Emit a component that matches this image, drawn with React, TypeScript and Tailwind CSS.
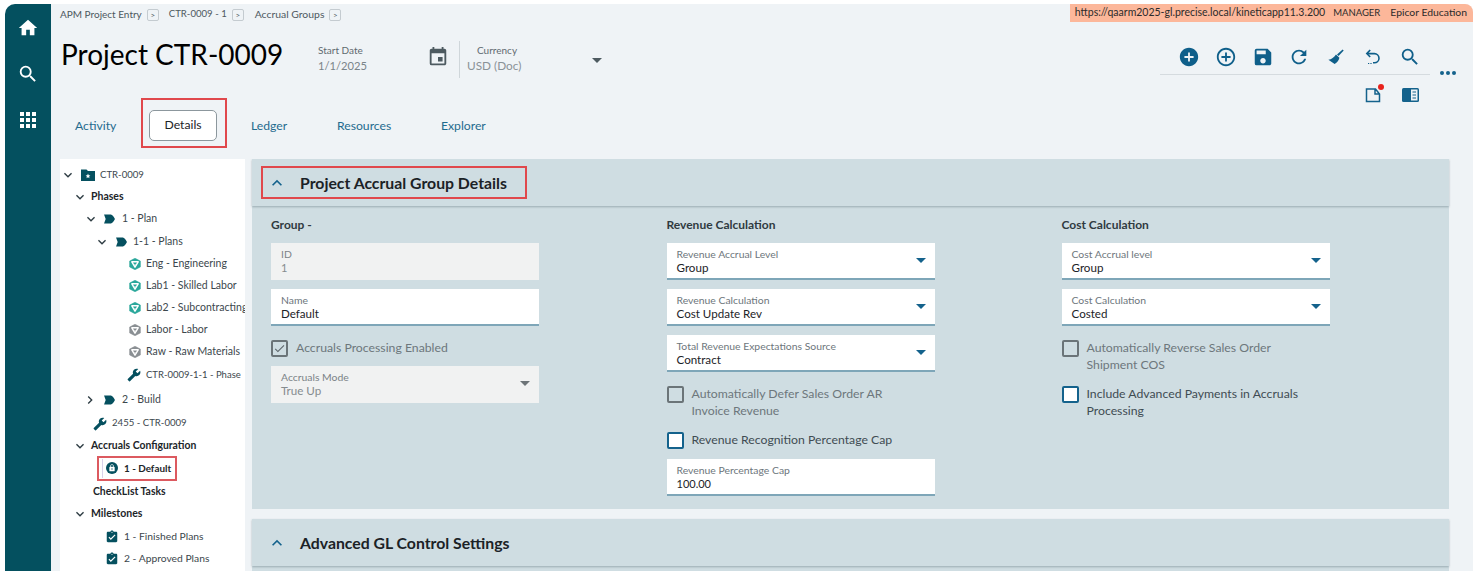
import React from "react";
import {
  MdHome, MdSearch, MdApps, MdAddCircle, MdAddCircleOutline, MdSave, MdRefresh, MdEvent, MdBuild,
  MdAssignmentTurnedIn, MdExpandMore, MdChevronRight, MdExpandLess, MdArrowDropDown, MdCheck, MdLock,
} from "react-icons/md";

function Phase({ cls = "" }: { cls?: string }) {
  return (
    <svg viewBox="0 0 12 11" className={"w-[11px] h-[10px] shrink-0 " + cls}>
      <path d="M0 0.5H7.5C9 0.5 11 3.5 12 5.5C11 7.5 9 10.5 7.5 10.5H0L1.8 5.5Z" fill="#05505f" />
    </svg>
  );
}

function Res({ color, cls = "" }: { color: string; cls?: string }) {
  return (
    <svg viewBox="0 0 12 12" className={"w-[12px] h-[12px] shrink-0 " + cls}>
      <path d="M6 0.2L11.4 3.1V8.9L6 11.8L0.6 8.9V3.1Z" fill={color} stroke={color} strokeWidth="0.5" strokeLinejoin="round" />
      <path d="M2.8 3.8H9.2L6 9.2Z" stroke="#fff" strokeWidth="1.4" fill="none" strokeLinejoin="round" />
      <path d="M6 6.2V7.2" stroke="#fff" strokeWidth="1" />
    </svg>
  );
}

function Folder() {
  return (
    <svg viewBox="0 0 14 12" className="w-[14px] h-[12px] ml-[5px] shrink-0">
      <path d="M0 0.5H5.5L7 2H14V12H0Z" fill="#05505f" />
      <path d="M7 4.6L7.7 6.2L9.4 6.4L8.1 7.5L8.5 9.2L7 8.3L5.5 9.2L5.9 7.5L4.6 6.4L6.3 6.2Z" fill="#fff" />
    </svg>
  );
}

const Wrench = () => <MdBuild className="w-[14px] h-[14px] shrink-0 -scale-x-100 text-[#05505f]" />;
const Clip = () => <MdAssignmentTurnedIn className="w-[14px] h-[14px] shrink-0 text-[#05505f]" />;

type Row = { h: string; pl: string; chev?: "d" | "r"; icon?: React.ReactNode; text: string; tcls: string; bold?: boolean };

const rows: Row[] = [
  { h: "h-[22px]", pl: "pl-0", chev: "d", icon: <Folder />, text: "CTR-0009", tcls: "ml-[5px] text-[9.6px]" },
  { h: "h-[22px]", pl: "pl-[12px]", chev: "d", text: "Phases", tcls: "ml-[3px] text-[10.5px]", bold: true },
  { h: "h-[22px]", pl: "pl-[23px]", chev: "d", icon: <Phase cls="ml-[5px]" />, text: "1 - Plan", tcls: "ml-[7px] text-[10.5px]" },
  { h: "h-[23px]", pl: "pl-[34px]", chev: "d", icon: <Phase cls="ml-[6px]" />, text: "1-1 - Plans", tcls: "ml-[6px] text-[10.5px]" },
  { h: "h-[22px]", pl: "pl-[69px]", icon: <Res color="#2aa79b" />, text: "Eng - Engineering", tcls: "ml-[5px] text-[10.5px]" },
  { h: "h-[22px]", pl: "pl-[69px]", icon: <Res color="#2aa79b" />, text: "Lab1 - Skilled Labor", tcls: "ml-[5px] text-[10.5px]" },
  { h: "h-[22px]", pl: "pl-[69px]", icon: <Res color="#2aa79b" />, text: "Lab2 - Subcontracting", tcls: "ml-[5px] text-[10.5px]" },
  { h: "h-[22px]", pl: "pl-[69px]", icon: <Res color="#8a8f93" />, text: "Labor - Labor", tcls: "ml-[5px] text-[10.5px]" },
  { h: "h-[22px]", pl: "pl-[69px]", icon: <Res color="#8a8f93" />, text: "Raw - Raw Materials", tcls: "ml-[5px] text-[10.5px]" },
  { h: "h-[24px]", pl: "pl-[67px]", icon: <Wrench />, text: "CTR-0009-1-1 - Phase", tcls: "ml-[5px] text-[9.5px]" },
  { h: "h-[25px]", pl: "pl-[22px]", chev: "r", icon: <Phase cls="ml-[6px]" />, text: "2 - Build", tcls: "ml-[7px] text-[10.5px]" },
  { h: "h-[23px]", pl: "pl-[33px]", icon: <Wrench />, text: "2455 - CTR-0009", tcls: "ml-[5px] text-[9.6px]" },
  { h: "h-[22px]", pl: "pl-[12px]", chev: "d", text: "Accruals Configuration", tcls: "ml-[3px] text-[10.4px]", bold: true },
];

const rowsAfter: Row[] = [
  { h: "h-[23px]", pl: "pl-[33px]", text: "CheckList Tasks", tcls: "text-[10.4px]", bold: true },
  { h: "h-[22px]", pl: "pl-[12px]", chev: "d", text: "Milestones", tcls: "ml-[3px] text-[10.5px]", bold: true },
  { h: "h-[23px]", pl: "pl-[45px]", icon: <Clip />, text: "1 - Finished Plans", tcls: "ml-[5px] text-[10.3px]" },
  { h: "h-[22px]", pl: "pl-[45px]", icon: <Clip />, text: "2 - Approved Plans", tcls: "ml-[5px] text-[10.3px]" },
];

function TreeRow({ r }: { r: Row }) {
  return (
    <div className={"flex items-center whitespace-nowrap overflow-hidden pr-[2px] " + r.h + " " + r.pl}>
      {r.chev === "d" && <MdExpandMore className="w-[16px] h-[16px] shrink-0 text-[#2d3b42]" />}
      {r.chev === "r" && <MdChevronRight className="w-[16px] h-[16px] shrink-0 text-[#2d3b42]" />}
      {r.icon}
      <span className={r.tcls + " " + (r.bold ? "font-bold text-[#1c2529]" : "text-[#3c474d]")}>{r.text}</span>
    </div>
  );
}

function Field({ label, value, disabled, select, valueCls = "text-[11.6px]" }: { label: string; value: string; disabled?: boolean; select?: boolean; valueCls?: string }) {
  return (
    <div className={"relative h-[37px] w-[268px] pl-[10px] pt-[4px] " + (disabled ? "bg-[#f1f2f2]" : "bg-white border-b-2 border-[#7ea6b8]")}>
      <div className={"text-[10.4px] leading-[14px] " + (disabled ? "text-[#7b8287]" : "text-[#6d767c]")}>{label}</div>
      <div className={"leading-[14px] " + valueCls + " " + (disabled ? "text-[#858b8f]" : "text-[#1c2327]")}>{value}</div>
      {select && (
        <MdArrowDropDown className={"absolute right-[2px] top-[5px] w-[24px] h-[24px] " + (disabled ? "text-[#6d7478]" : "text-[#14628c]")} />
      )}
    </div>
  );
}

function Check({ lines, active, checked, cls }: { lines: string[]; active?: boolean; checked?: boolean; cls: string }) {
  return (
    <div className={"flex w-[268px] " + cls}>
      <div className={"w-[17px] h-[17px] shrink-0 rounded-[2px] border-2 flex items-center justify-center " + (active ? "bg-white border-[#14628c]" : "border-[#6b7478]")}>
        {checked && <MdCheck className="w-[15px] h-[15px] text-[#5d666b]" />}
      </div>
      <div className={"ml-[8px] -mt-[1px] text-[12.25px] leading-[17px] " + (active ? "text-[#3f4c53]" : "text-[#6d777c]")}>
        {lines.map((l) => <div key={l} className="whitespace-nowrap">{l}</div>)}
      </div>
    </div>
  );
}

function CardHeader({ title, boxed }: { title: string; boxed?: boolean }) {
  return (
    <div className="h-[47px] shrink-0 flex items-center pl-[9px] shadow-[0_1px_2px_rgba(90,110,120,0.45)]">
      <div className={"flex items-center h-[33px] w-[266px] pl-[4px] border-2 " + (boxed ? "border-[#e0484c]" : "border-transparent")}>
        <MdExpandLess className="w-[20px] h-[20px] text-[#14628c]" />
        <span className="ml-[13px] text-[15.8px] font-bold text-[#1b2226] whitespace-nowrap">{title}</span>
      </div>
    </div>
  );
}

function Crumb({ text, cls }: { text: string; cls: string }) {
  return (
    <>
      <span className={cls}>{text}</span>
      <span className="ml-[5px] w-[12px] h-[12px] border border-[#c4cbd0] rounded-[2px] flex items-center justify-center text-[8px] leading-none">&gt;</span>
    </>
  );
}

export default function App() {
  const tool = "w-[22px] h-[22px] text-[#0f5f8a]";
  return (
    <div className="w-[1477px] h-[571px] overflow-hidden bg-white pt-[4px] pl-[5px] pr-[4px] flex [font-family:Lato,sans-serif]">
      <aside className="w-[46px] shrink-0 bg-[#04505f] rounded-tl-[10px] flex flex-col items-center pt-[13px] text-white">
        <MdHome className="w-[22px] h-[22px]" />
        <MdSearch className="w-[22px] h-[22px] mt-[24px]" />
        <MdApps className="w-[24px] h-[24px] mt-[23px]" />
      </aside>
      <main className="flex-1 min-w-0 bg-[#eff3f6] rounded-tr-[8px] flex flex-col">
        <div className="h-[18px] shrink-0 flex items-start justify-between">
          <div className="flex items-center pl-[9px] h-[18px] text-[#4d585e] pt-[3px]">
            <Crumb text="APM Project Entry" cls="text-[10px]" />
            <Crumb text="CTR-0009 - 1" cls="ml-[10px] text-[9.6px]" />
            <Crumb text="Accrual Groups" cls="ml-[11px] text-[10.4px]" />
          </div>
          <div className="h-[18px] w-[403px] bg-[#fcb79a] rounded-tr-[8px] flex items-center justify-end pr-[6px] text-[#2b2b2b] whitespace-nowrap">
            <span className="text-[10.5px]">https://qaarm2025-gl.precise.local/kineticapp11.3.200</span>
            <span className="ml-[8px] text-[9.5px]">MANAGER</span>
            <span className="ml-[10px] text-[10.4px]">Epicor Education</span>
          </div>
        </div>

        <div className="h-[76px] shrink-0 flex">
          <div className="w-[267px] pl-[10px] pt-[12px] text-[28px] leading-[40px] text-black whitespace-nowrap">Project CTR-0009</div>
          <div className="w-[109px] pt-[22px]">
            <div className="text-[10px] leading-[13px] text-[#5f6a70]">Start Date</div>
            <div className="text-[11.2px] leading-[17px] text-[#7a8489]">1/1/2025</div>
          </div>
          <MdEvent className="w-[22px] h-[22px] mt-[24px] text-[#4d5a60]" />
          <div className="ml-[10px] mt-[19px] w-px h-[37px] bg-[#cfd6da]" />
          <div className="relative w-[150px] pl-[7px] pt-[22px]">
            <div className="text-[10px] leading-[13px] text-[#5f6a70] pl-[10px]">Currency</div>
            <div className="text-[11.8px] leading-[17px] text-[#8a9297]">USD (Doc)</div>
            <MdArrowDropDown className="absolute left-[125px] top-[26px] w-[24px] h-[24px] text-[#4d5a60]" />
          </div>
          <div className="flex-1 flex flex-col items-end">
            <div className="flex items-start">
              <div className="h-[28px] w-[270px] pt-[24px] border-b border-[#d5dbdf] box-content">
                <div className="h-[22px] pl-[18px] flex items-center gap-[14.8px]">
                  <MdAddCircle className={tool} />
                  <MdAddCircleOutline className={tool} />
                  <MdSave className={tool} />
                  <MdRefresh className={tool} />
                  <svg viewBox="0 0 16 16" className="w-[16px] h-[16px] mx-[3px]">
                    <path d="M14.6 0.4L15.7 1.5L10.6 7L9 5.4Z" fill="#0f5f8a" />
                    <path d="M8 5.4L11.4 8.8C11 11 9.2 13.6 6.6 15L0.4 10.8C3.6 10.2 6 8.4 8 5.4Z" fill="#0f5f8a" />
                  </svg>
                  <svg viewBox="0 0 16 16" className="w-[16px] h-[16px] mx-[3px]">
                    <path d="M5.2 1L1.8 4.6L5.2 8" fill="none" stroke="#0f5f8a" strokeWidth="1.6" />
                    <path d="M2.4 4.6H9.4A4.6 4.6 0 0 1 9.4 13.8H8" fill="none" stroke="#0f5f8a" strokeWidth="1.6" />
                    <path d="M3 14.5H4.2M5.4 14.5H6.6" stroke="#0f5f8a" strokeWidth="1.2" />
                  </svg>
                  <MdSearch className={tool} />
                </div>
              </div>
              <div className="w-[43px] pt-[49px] pl-[10px] flex gap-[2px]">
                <span className="w-[4px] h-[4px] rounded-full bg-[#14628c]" />
                <span className="w-[4px] h-[4px] rounded-full bg-[#14628c]" />
                <span className="w-[4px] h-[4px] rounded-full bg-[#14628c]" />
              </div>
            </div>
            <div className="flex items-center gap-[21px] pr-[54px] pt-[12px]">
              <div className="relative w-[16px] h-[16px]">
                <svg viewBox="0 0 16 16" className="w-[16px] h-[16px]">
                  <path d="M1.5 2H10.5L14.5 7V14.5H1.5Z M10 2V7H14.5" fill="none" stroke="#14628c" strokeWidth="1.5" />
                </svg>
                <span className="absolute -right-[3px] -top-[3px] w-[6px] h-[6px] rounded-full bg-[#e8221c]" />
              </div>
              <svg viewBox="0 0 17 14" className="w-[17px] h-[14px]">
                <rect x="0" y="0" width="17" height="14" rx="1.5" fill="#14628c" />
                <rect x="9" y="1.5" width="6.5" height="11" fill="#eef3f6" />
                <path d="M10.5 4H14M10.5 7H14M10.5 10H14" stroke="#14628c" strokeWidth="1" />
              </svg>
            </div>
          </div>
        </div>

        <div className="h-[50px] shrink-0 flex items-center pl-[24px] text-[12.2px] text-[#1f6b8e]">
          <span className="w-[66px] pt-[6px]">Activity</span>
          <div className="w-[86px] h-[50px] border-2 border-[#e0484c] flex items-start pl-[6px] pt-[10px]">
            <div className="w-[68px] h-[31px] bg-white rounded-[5px] border border-[#8c979d] flex items-center justify-center text-[#1c2327]">Details</div>
          </div>
          <span className="ml-[24px] w-[86px] pt-[6px]">Ledger</span>
          <span className="w-[104px] pt-[6px]">Resources</span>
          <span className="pt-[6px]">Explorer</span>
        </div>

        <div className="flex-1 min-h-0 mt-[11px] flex pl-[9px] overflow-hidden">
          <nav className="w-[185px] shrink-0 bg-white pt-[5px] h-[420px]">
            {rows.map((r) => <TreeRow key={r.text} r={r} />)}
            <div className="h-[23px] flex items-center pl-[37px]">
              <div className="w-[80px] h-[25px] shrink-0 border-2 border-[#dc5a60] p-[1px] pl-[3px]">
                <div className="h-full flex items-center pl-[3px] pb-[1px] border-l border-[#d9d2ea]">
                  <span className="w-[12px] h-[12px] rounded-full bg-[#05505f] flex items-center justify-center shrink-0">
                    <MdLock className="w-[8px] h-[8px] text-white" />
                  </span>
                  <span className="ml-[6px] text-[9.9px] font-bold text-[#1c2529] whitespace-nowrap">1 - Default</span>
                </div>
              </div>
            </div>
            {rowsAfter.map((r) => <TreeRow key={r.text} r={r} />)}
          </nav>

          <div className="ml-[7px] w-[1197px] shrink-0 flex flex-col gap-[10px]">
            <section className="h-[350px] shrink-0 bg-[#cfdde2] flex flex-col">
              <CardHeader title="Project Accrual Group Details" boxed />
              <div className="grid grid-cols-[395.5px_395px_268px] pl-[19px] pt-[11px]">
                <div>
                  <div className="h-[15px] leading-[15px] text-[12px] font-bold text-[#2f3a40] mb-[11px]">Group -</div>
                  <Field label="ID" value="1" disabled valueCls="text-[11px]" />
                  <div className="mt-[9px]"><Field label="Name" value="Default" /></div>
                  <Check lines={["Accruals Processing Enabled"]} checked cls="mt-[14px]" />
                  <div className="mt-[9px]"><Field label="Accruals Mode" value="True Up" disabled select /></div>
                </div>
                <div>
                  <div className="h-[15px] leading-[15px] text-[12px] font-bold text-[#2f3a40] mb-[11px]">Revenue Calculation</div>
                  <Field label="Revenue Accrual Level" value="Group" select />
                  <div className="mt-[9px]"><Field label="Revenue Calculation" value="Cost Update Rev" select /></div>
                  <div className="mt-[9px]"><Field label="Total Revenue Expectations Source" value="Contract" select /></div>
                  <Check lines={["Automatically Defer Sales Order AR", "Invoice Revenue"]} cls="mt-[14px]" />
                  <Check lines={["Revenue Recognition Percentage Cap"]} active cls="mt-[13px]" />
                  <div className="mt-[10px]"><Field label="Revenue Percentage Cap" value="100.00" valueCls="text-[11px]" /></div>
                </div>
                <div>
                  <div className="h-[15px] leading-[15px] text-[12px] font-bold text-[#2f3a40] mb-[11px]">Cost Calculation</div>
                  <Field label="Cost Accrual level" value="Group" select />
                  <div className="mt-[9px]"><Field label="Cost Calculation" value="Costed" select /></div>
                  <Check lines={["Automatically Reverse Sales Order", "Shipment COS"]} cls="mt-[14px]" />
                  <Check lines={["Include Advanced Payments in Accruals", "Processing"]} active cls="mt-[13px]" />
                </div>
              </div>
            </section>
            <section className="h-[80px] shrink-0 bg-[#cfdde2]">
              <CardHeader title="Advanced GL Control Settings" />
            </section>
          </div>
        </div>
      </main>
    </div>
  );
}
